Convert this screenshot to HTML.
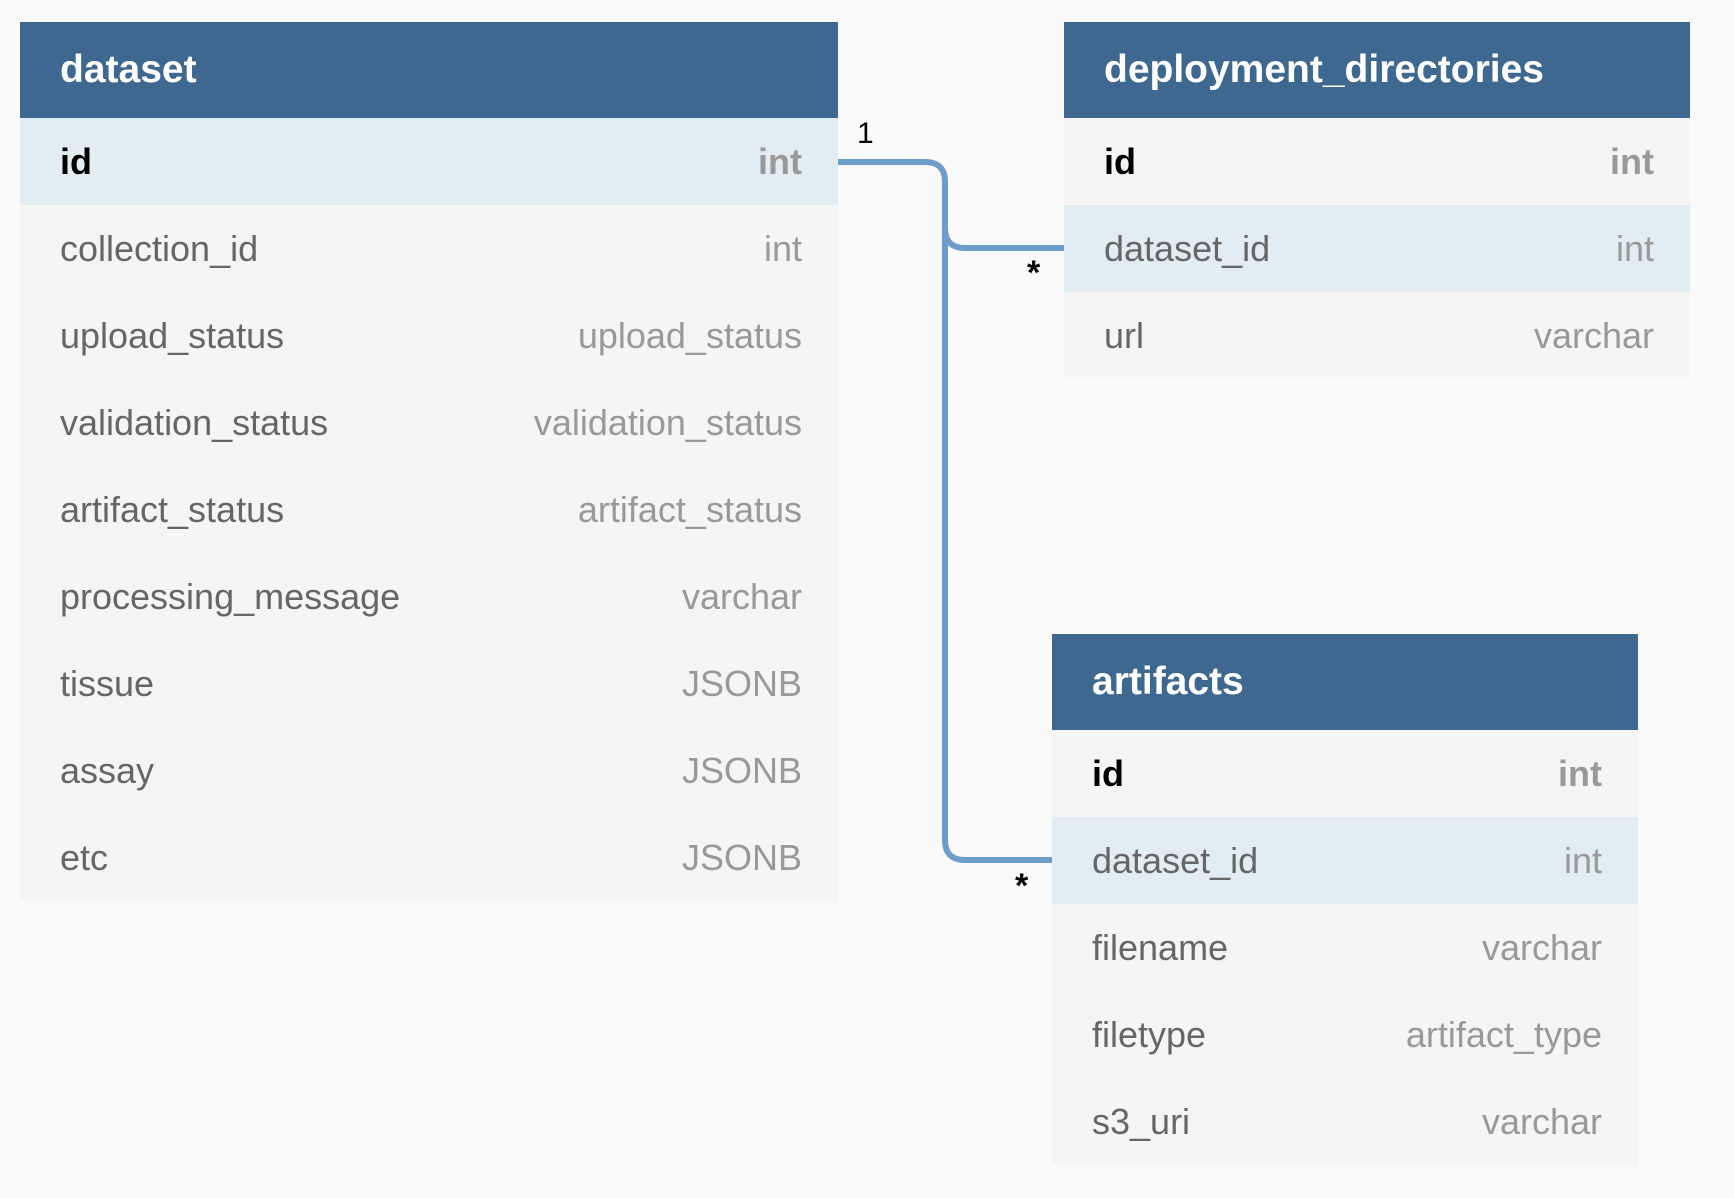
<!DOCTYPE html>
<html><head><style>
body{margin:0;width:1734px;height:1198px;background:#fafafa;position:relative;overflow:hidden;font-family:"Liberation Sans",sans-serif}
.t{position:absolute;background:#f5f5f5}
.h{height:96px;background:#3e6890;color:#fff;font-weight:bold;font-size:39px;line-height:96px;padding-left:40px;box-sizing:border-box}
.r{height:87px;display:flex;justify-content:space-between;align-items:center;padding:0 36px 0 40px;font-size:36px;color:#666}
.r span:last-child{color:#999}
.r.hl{background:#e1ecf3}
.r.pk span:first-child{color:#000;font-weight:bold}
.r.pk span:last-child{font-weight:bold}
.l{position:absolute;font-size:30px;color:#000}
.s{font-size:34px;font-weight:bold}
</style></head><body>
<svg style="position:absolute;left:0;top:0" width="1734" height="1198">
<path d="M838 162 H925 Q945 162 945 182 V840 Q945 860 965 860 H1052" fill="none" stroke="#6e9dcb" stroke-width="6"/>
<path d="M945 228 Q945 248 965 248 H1064" fill="none" stroke="#6e9dcb" stroke-width="6"/>
</svg>
<div class="t" style="left:20px;top:22px;width:818px">
<div class="h">dataset</div>
<div class="r hl pk"><span>id</span><span>int</span></div>
<div class="r"><span>collection_id</span><span>int</span></div>
<div class="r"><span>upload_status</span><span>upload_status</span></div>
<div class="r"><span>validation_status</span><span>validation_status</span></div>
<div class="r"><span>artifact_status</span><span>artifact_status</span></div>
<div class="r"><span>processing_message</span><span>varchar</span></div>
<div class="r"><span>tissue</span><span>JSONB</span></div>
<div class="r"><span>assay</span><span>JSONB</span></div>
<div class="r"><span>etc</span><span>JSONB</span></div>
</div>
<div class="t" style="left:1064px;top:22px;width:626px">
<div class="h">deployment_directories</div>
<div class="r pk"><span>id</span><span>int</span></div>
<div class="r hl"><span>dataset_id</span><span>int</span></div>
<div class="r"><span>url</span><span>varchar</span></div>
</div>
<div class="t" style="left:1052px;top:634px;width:586px">
<div class="h">artifacts</div>
<div class="r pk"><span>id</span><span>int</span></div>
<div class="r hl"><span>dataset_id</span><span>int</span></div>
<div class="r"><span>filename</span><span>varchar</span></div>
<div class="r"><span>filetype</span><span>artifact_type</span></div>
<div class="r"><span>s3_uri</span><span>varchar</span></div>
</div>
<div class="l" style="left:857px;top:117px">1</div>
<div class="l s" style="left:1027px;top:254px">*</div>
<div class="l s" style="left:1015px;top:867px">*</div>
</body></html>
